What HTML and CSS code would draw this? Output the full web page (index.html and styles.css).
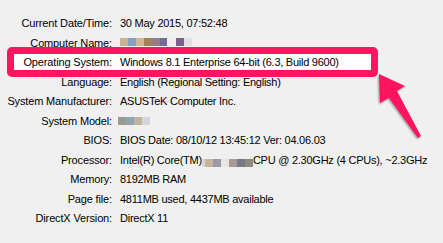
FILE: index.html
```html
<!DOCTYPE html>
<html lang="en">
<head>
  <meta charset="UTF-8">
  <title>System Information</title>
  <link rel="stylesheet" href="styles.css">
</head>
<body>
  <div class="info">
    <div class="row"><span class="label">Current Date/Time:</span><span class="value">30 May 2015, 07:52:48</span></div>
    <div class="row"><span class="label">Computer Name:</span><span class="value"><span class="blur blur-name"></span></span></div>
    <div class="row highlight"><span class="label">Operating System:</span><span class="value">Windows 8.1 Enterprise 64-bit (6.3, Build 9600)</span></div>
    <div class="row"><span class="label">Language:</span><span class="value">English (Regional Setting: English)</span></div>
    <div class="row"><span class="label">System Manufacturer:</span><span class="value">ASUSTeK Computer Inc.</span></div>
    <div class="row"><span class="label">System Model:</span><span class="value"><span class="blur blur-model"></span></span></div>
    <div class="row"><span class="label">BIOS:</span><span class="value">BIOS Date: 08/10/12 13:45:12 Ver: 04.06.03</span></div>
    <div class="row"><span class="label">Processor:</span><span class="value">Intel(R) Core(TM)<span class="blur blur-cpu"></span>CPU @ 2.30GHz (4 CPUs), ~2.3GHz</span></div>
    <div class="row"><span class="label">Memory:</span><span class="value">8192MB RAM</span></div>
    <div class="row"><span class="label">Page file:</span><span class="value">4811MB used, 4437MB available</span></div>
    <div class="row"><span class="label">DirectX Version:</span><span class="value">DirectX 11</span></div>
  </div>

  <!-- annotation arrow -->
  <svg class="arrow" viewBox="0 0 443 243" width="443" height="243">
    <polygon points="379,74 405,86 397,91 421,136 418,138 389,98 380,103" />
  </svg>
</body>
</html>
```

FILE: styles.css
```css
body {
  margin: 0;
  background: #f0f0f0;
  font-family: "Liberation Sans", Arial, sans-serif;
  font-size: 11px;
  color: #000;
}
.info {
  padding-top: 14px;
}
.row {
  display: flex;
  height: 19.5px;
  line-height: 19.5px;
  white-space: nowrap;
}
.label {
  width: 112px;
  text-align: right;
  flex-shrink: 0;
  letter-spacing: -0.15px;
}
.value {
  margin-left: 8px;
  display: flex;
  align-items: center;
  letter-spacing: -0.25px;
}
.highlight {
  position: relative;
  z-index: 0;
}
.highlight::before {
  content: "";
  position: absolute;
  left: 7px;
  top: -6px;
  width: 371px;
  height: 30px;
  box-sizing: border-box;
  border: 7px solid #ff1460;
  border-radius: 5px;
  background: #fff;
  z-index: -1;
}
.blur {
  display: inline-block;
  height: 8px;
}
.blur-name {
  width: 72px;
  margin-top: -2px;
  background: linear-gradient(to right,
    #c4b49a 0 8px, #7fa3bf 8px 16px, #cdb99a 16px 24px, #9e8456 24px 32px,
    #8e7f8d 32px 40px, #6e6f97 40px 47px, #eceef0 47px 56px,
    #76648f 56px 64px, #dde0e5 64px 72px);
}
.blur-model {
  width: 32px;
  margin-left: -2px;
  background: linear-gradient(to right,
    #9b9a90 0 8px, #8fa5b0 8px 16px, #c2b3a0 16px 24px, #d4d5dd 24px 32px);
}
.blur-cpu {
  width: 51px;
  margin-top: 5px;
  background: linear-gradient(to right,
    #dcd8cf 0 3px, #c8b49b 3px 11px, #9c97ab 11px 19px, #e8e6e1 19px 27px,
    #a89a90 27px 35px, #777889 35px 43px, #8e8a7e 43px 51px);
}
.arrow {
  position: absolute;
  left: 0;
  top: 0;
  pointer-events: none;
  filter: drop-shadow(-1px 1px 1px rgba(0, 0, 0, 0.4));
}
.arrow polygon {
  fill: #ff1460;
}
```
